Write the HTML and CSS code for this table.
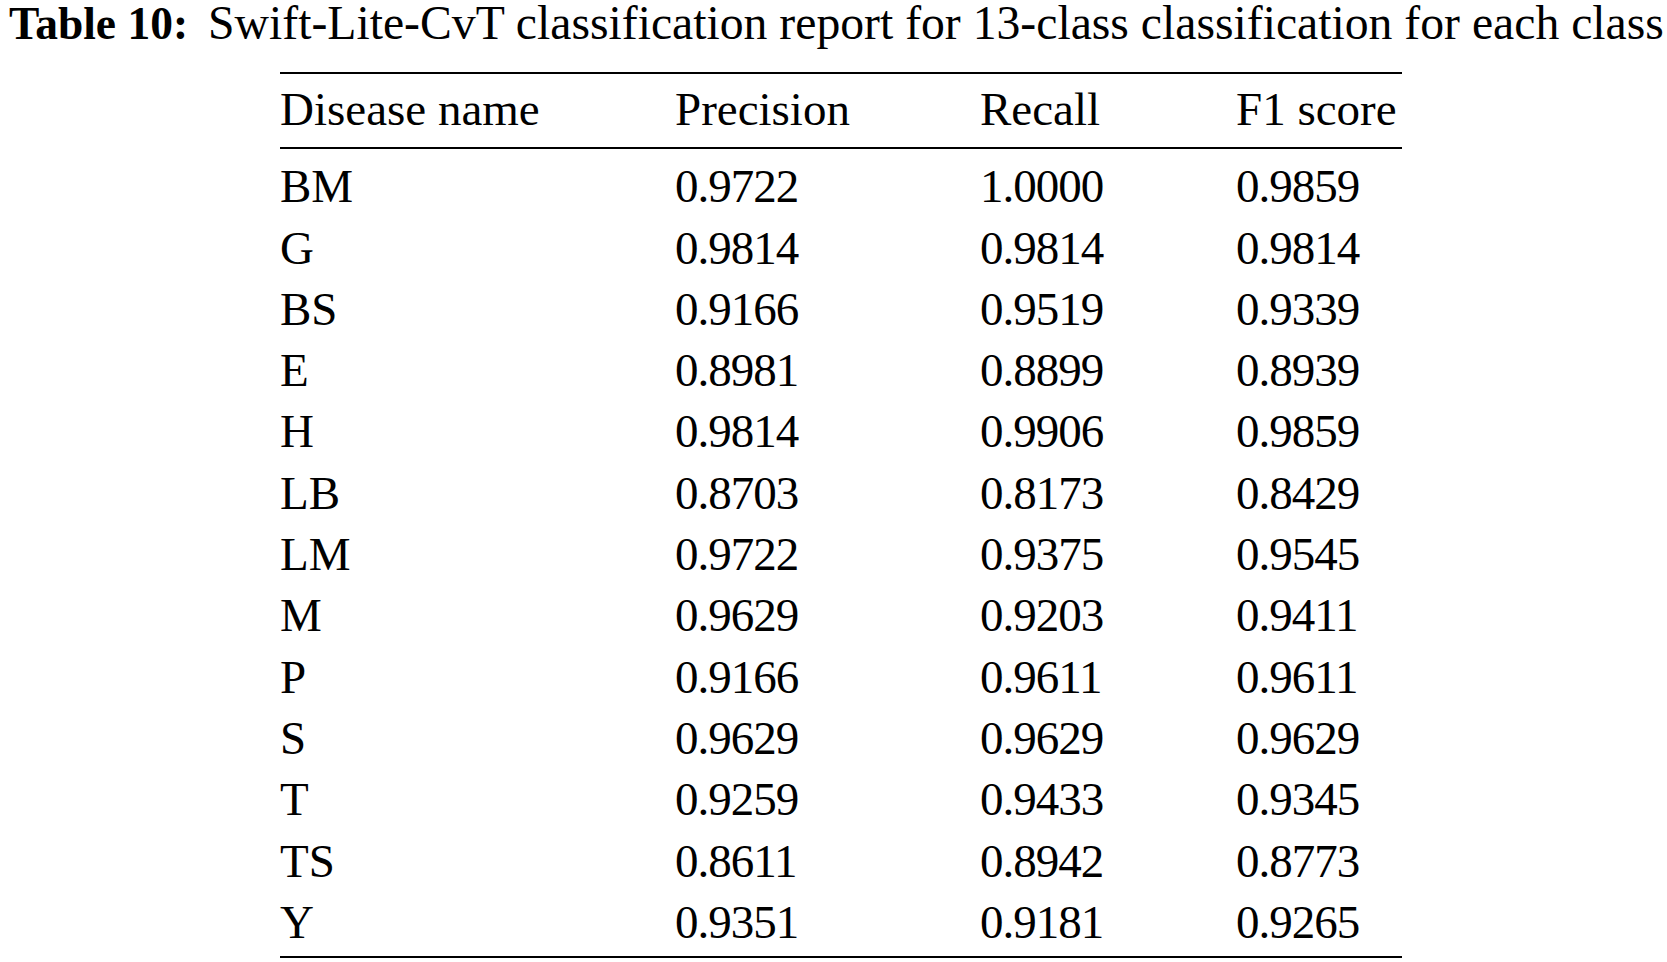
FILE: index.html
```html
<!DOCTYPE html>
<html lang="en">
<head>
<meta charset="utf-8">
<title>Table 10</title>
<link rel="stylesheet" href="styles.css">
</head>
<body>
<div class="page">
  <p class="caption"><span class="label">Table 10:</span>Swift-Lite-CvT classification report for 13-class classification for each class</p>
  <table class="report">
    <colgroup>
      <col class="c1"><col class="c2"><col class="c3"><col class="c4">
    </colgroup>
    <thead>
      <tr><th>Disease name</th><th>Precision</th><th>Recall</th><th>F1 score</th></tr>
    </thead>
    <tbody>
      <tr class="first"><td>BM</td><td>0.9722</td><td>1.0000</td><td>0.9859</td></tr>
      <tr><td>G</td><td>0.9814</td><td>0.9814</td><td>0.9814</td></tr>
      <tr><td>BS</td><td>0.9166</td><td>0.9519</td><td>0.9339</td></tr>
      <tr><td>E</td><td>0.8981</td><td>0.8899</td><td>0.8939</td></tr>
      <tr><td>H</td><td>0.9814</td><td>0.9906</td><td>0.9859</td></tr>
      <tr><td>LB</td><td>0.8703</td><td>0.8173</td><td>0.8429</td></tr>
      <tr><td>LM</td><td>0.9722</td><td>0.9375</td><td>0.9545</td></tr>
      <tr><td>M</td><td>0.9629</td><td>0.9203</td><td>0.9411</td></tr>
      <tr><td>P</td><td>0.9166</td><td>0.9611</td><td>0.9611</td></tr>
      <tr><td>S</td><td>0.9629</td><td>0.9629</td><td>0.9629</td></tr>
      <tr><td>T</td><td>0.9259</td><td>0.9433</td><td>0.9345</td></tr>
      <tr><td>TS</td><td>0.8611</td><td>0.8942</td><td>0.8773</td></tr>
      <tr class="last"><td>Y</td><td>0.9351</td><td>0.9181</td><td>0.9265</td></tr>
    </tbody>
  </table>
</div>
</body>
</html>
```
FILE: styles.css
```css
html, body {
  margin: 0;
  padding: 0;
  background: #ffffff;
}
body {
  color: #000000;
  font-family: "Liberation Serif", "Times New Roman", serif;
}
.page {
  width: 1667px;
  height: 962px;
  overflow: hidden;
}
.caption {
  margin: 0;
  padding: 2px 0 0 9px;
  font-size: 47.7px;
  line-height: 42px;
  height: 42px;
  white-space: nowrap;
}
.caption .label {
  font-weight: bold;
  font-size: 45.5px;
  margin-right: 20px;
}
.report {
  margin-left: 280px;
  margin-top: 28px;
  width: 1122px;
  border-collapse: collapse;
  table-layout: fixed;
  font-size: 47px;
  line-height: 61.3px;
}
.report .c1 { width: 395px; }
.report .c2 { width: 305px; }
.report .c3 { width: 256px; }
.report .c4 { width: 166px; }
.report th,
.report td {
  padding: 0;
  text-align: left;
  font-weight: normal;
  white-space: nowrap;
}
.report thead tr {
  border-top: 2px solid #000;
  border-bottom: 2px solid #000;
}
.report thead th {
  padding-top: 5px;
  padding-bottom: 6.5px;
}
.report tbody tr.first td {
  padding-top: 7.5px;
}
.report tbody tr.last td {
  padding-bottom: 2.5px;
}
.report tbody tr.last {
  border-bottom: 2px solid #000;
}
.report td:not(:first-child) {
  letter-spacing: -1px;
}
```
